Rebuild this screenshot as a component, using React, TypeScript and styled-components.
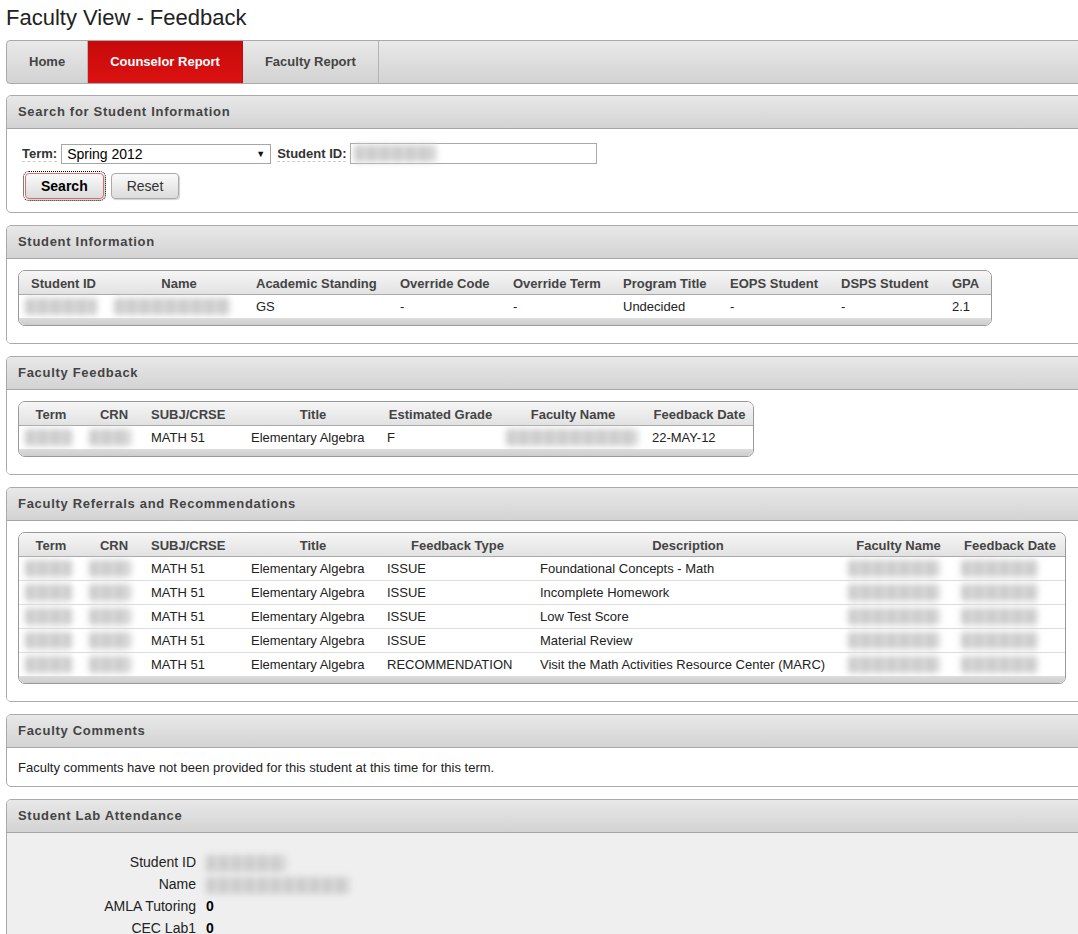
import styled, { createGlobalStyle, css } from 'styled-components';

const GlobalStyle = createGlobalStyle`
  html, body {
    margin: 0;
    padding: 0;
    overflow: hidden;
    background: #fff;
  }
  body {
    font-family: "Liberation Sans", Arial, sans-serif;
    font-size: 13px;
    color: #222;
  }
`;

const Page = styled.div`
  width: 1090px;
  padding: 5px 0 0 6px;
`;

const Title = styled.h1`
  margin: 0 0 10px;
  font-size: 22px;
  line-height: 25px;
  font-weight: normal;
  color: #222;
`;

const NavBar = styled.nav`
  display: flex;
  height: 42px;
  margin-bottom: 11px;
  border: 1px solid #aaa;
  border-radius: 4px;
  overflow: hidden;
  background: linear-gradient(#e9e9e9, #d2d2d2);
`;

const Tab = styled.a<{ $active?: boolean }>`
  display: flex;
  align-items: center;
  padding: 0 22px 2px;
  font-size: 13px;
  font-weight: bold;
  color: #444;
  text-decoration: none;
  border-right: 1px solid #b4b4b4;
  ${p => p.$active && css`
    color: #fff;
    background: linear-gradient(#c70a0a, #dc1111);
    border-right-color: #c40a0a;
  `}
`;

const Panel = styled.section`
  margin-bottom: 12px;
  border: 1px solid #aaa;
  border-radius: 5px;
  overflow: hidden;
  background: #fff;
`;

const PanelHeader = styled.h2`
  margin: 0;
  height: 32px;
  line-height: 32px;
  padding-left: 11px;
  font-size: 13px;
  font-weight: bold;
  letter-spacing: 0.7px;
  color: #444;
  background: linear-gradient(#e8e8e8, #d3d3d3);
  border-bottom: 1px solid #a6a6a6;
`;

const PanelBody = styled.div`
  padding: 11px 11px 17px;
  background: #fff;
`;

const SearchBody = styled.div`
  padding: 14px 0 13px 15px;
  display: flex;
  flex-direction: column;
  gap: 9px;
`;

const FieldRow = styled.div`
  display: flex;
  align-items: center;
  gap: 4px;
`;

const Label = styled.label`
  font-weight: bold;
  color: #333;
  border-bottom: 1px dashed #ccc;
  line-height: 15px;
`;

const SelectBox = styled.div`
  position: relative;
  box-sizing: border-box;
  width: 210px;
  height: 20px;
  margin-right: 2px;
  padding-left: 5px;
  border: 1px solid #a6a6a6;
  font-size: 14px;
  line-height: 18px;
  color: #000;
`;

const Caret = styled.span`
  position: absolute;
  right: 5px;
  top: 0;
  font-size: 9px;
  color: #111;
`;

const TextInput = styled.div`
  box-sizing: border-box;
  width: 247px;
  height: 21px;
  padding: 1px 3px;
  border: 1px solid #a9a9a9;
`;

const ButtonRow = styled.div`
  display: flex;
  gap: 7px;
  padding-left: 3px;
`;

const Button = styled.button<{ $primary?: boolean }>`
  height: 26px;
  padding: 0 15px;
  border: 1px solid #a9a9a9;
  border-radius: 4px;
  background: linear-gradient(#fafafa, #dcdcdc);
  box-shadow: 1px 1px 1px rgba(0, 0, 0, 0.18);
  font-family: "Liberation Sans", Arial, sans-serif;
  font-size: 14px;
  color: #333;
  ${p => p.$primary && css`
    border-color: #e06a6a;
    font-weight: bold;
    color: #000;
    outline: 1px dotted #000;
    outline-offset: 1px;
  `}
`;

const TableFrame = styled.div`
  width: fit-content;
  border: 1px solid #999;
  border-radius: 7px;
  overflow: hidden;
  background: #fff;
`;

const Grid = styled.table`
  border-collapse: collapse;
  table-layout: fixed;
`;

const Th = styled.th<{ $align: string }>`
  height: 21px;
  padding: 2px 6px 0;
  text-align: ${p => p.$align};
  white-space: nowrap;
  font-size: 13px;
  font-weight: bold;
  color: #444;
  background: linear-gradient(#f6f6f6, #e2e2e2);
  border-bottom: 1px solid #aaa;
`;

const Td = styled.td`
  height: 23px;
  padding: 0 6px;
  white-space: nowrap;
  color: #222;
  border-bottom: 1px solid #ddd;
`;

const TableFoot = styled.div`
  height: 6px;
  background: linear-gradient(#dadada, #cdcdcd);
`;

const Redacted = styled.span<{ $w: number }>`
  display: inline-block;
  vertical-align: middle;
  width: ${p => p.$w}px;
  height: 17px;
  border-radius: 3px;
  background: repeating-linear-gradient(90deg, #cbcbcb 0 9px, #dcdcdc 9px 13px);
  filter: blur(3px);
`;

const Note = styled.p`
  margin: 0;
  padding: 12px 11px 11px;
  line-height: 15px;
`;

const AttendanceList = styled.dl`
  margin: 0;
  padding: 18px 0 0;
  display: grid;
  grid-template-columns: 189px auto;
  column-gap: 10px;
  font-size: 14px;
  line-height: 22px;
  color: #222;
  background: #efefef;
  dt {
    text-align: right;
  }
  dd {
    margin: 0;
    font-weight: bold;
    color: #000;
  }
`;

type Col = { h: string; w: number; align?: string };
type Cell = string | number;

const blur = (w: number) => w;

const DataTable = ({ cols, rows }: { cols: Col[]; rows: Cell[][] }) => (
  <TableFrame>
    <Grid style={{ width: cols.reduce((s, c) => s + c.w, 0) }}>
      <colgroup>
        {cols.map(c => (
          <col key={c.h} style={{ width: c.w }} />
        ))}
      </colgroup>
      <thead>
        <tr>
          {cols.map(c => (
            <Th key={c.h} $align={c.align ?? 'center'}>{c.h}</Th>
          ))}
        </tr>
      </thead>
      <tbody>
        {rows.map((r, i) => (
          <tr key={i}>
            {r.map((v, j) => (
              <Td key={j}>{typeof v === 'number' ? <Redacted $w={v} /> : v}</Td>
            ))}
          </tr>
        ))}
      </tbody>
    </Grid>
    <TableFoot />
  </TableFrame>
);

const studentCols: Col[] = [
  { h: 'Student ID', w: 89 },
  { h: 'Name', w: 142 },
  { h: 'Academic Standing', w: 144, align: 'left' },
  { h: 'Override Code', w: 113, align: 'left' },
  { h: 'Override Term', w: 110, align: 'left' },
  { h: 'Program Title', w: 107, align: 'left' },
  { h: 'EOPS Student', w: 111, align: 'left' },
  { h: 'DSPS Student', w: 111, align: 'left' },
  { h: 'GPA', w: 45, align: 'left' },
];

const feedbackCols: Col[] = [
  { h: 'Term', w: 64 },
  { h: 'CRN', w: 62 },
  { h: 'SUBJ/CRSE', w: 100, align: 'left' },
  { h: 'Title', w: 136 },
  { h: 'Estimated Grade', w: 119 },
  { h: 'Faculty Name', w: 146 },
  { h: 'Feedback Date', w: 107 },
];

const referralCols: Col[] = [
  { h: 'Term', w: 64 },
  { h: 'CRN', w: 62 },
  { h: 'SUBJ/CRSE', w: 100, align: 'left' },
  { h: 'Title', w: 136 },
  { h: 'Feedback Type', w: 153 },
  { h: 'Description', w: 308 },
  { h: 'Faculty Name', w: 113 },
  { h: 'Feedback Date', w: 110 },
];

const referrals: [string, string][] = [
  ['ISSUE', 'Foundational Concepts - Math'],
  ['ISSUE', 'Incomplete Homework'],
  ['ISSUE', 'Low Test Score'],
  ['ISSUE', 'Material Review'],
  ['RECOMMENDATION', 'Visit the Math Activities Resource Center (MARC)'],
];

export default function App() {
  return (
    <>
      <GlobalStyle />
      <Page>
        <Title>Faculty View - Feedback</Title>

        <NavBar>
          <Tab>Home</Tab>
          <Tab $active>Counselor Report</Tab>
          <Tab>Faculty Report</Tab>
        </NavBar>

        <Panel>
          <PanelHeader>Search for Student Information</PanelHeader>
          <SearchBody>
            <FieldRow>
              <Label>Term:</Label>
              <SelectBox>
                Spring 2012
                <Caret>▼</Caret>
              </SelectBox>
              <Label>Student ID:</Label>
              <TextInput>
                <Redacted $w={82} />
              </TextInput>
            </FieldRow>
            <ButtonRow>
              <Button $primary>Search</Button>
              <Button>Reset</Button>
            </ButtonRow>
          </SearchBody>
        </Panel>

        <Panel>
          <PanelHeader>Student Information</PanelHeader>
          <PanelBody>
            <DataTable
              cols={studentCols}
              rows={[[blur(72), blur(116), 'GS', '-', '-', 'Undecided', '-', '-', '2.1']]}
            />
          </PanelBody>
        </Panel>

        <Panel>
          <PanelHeader>Faculty Feedback</PanelHeader>
          <PanelBody>
            <DataTable
              cols={feedbackCols}
              rows={[[blur(47), blur(42), 'MATH 51', 'Elementary Algebra', 'F', blur(132), '22-MAY-12']]}
            />
          </PanelBody>
        </Panel>

        <Panel>
          <PanelHeader>Faculty Referrals and Recommendations</PanelHeader>
          <PanelBody>
            <DataTable
              cols={referralCols}
              rows={referrals.map(([type, desc]) => [
                blur(47),
                blur(42),
                'MATH 51',
                'Elementary Algebra',
                type,
                desc,
                blur(92),
                blur(77),
              ])}
            />
          </PanelBody>
        </Panel>

        <Panel>
          <PanelHeader>Faculty Comments</PanelHeader>
          <Note>Faculty comments have not been provided for this student at this time for this term.</Note>
        </Panel>

        <Panel>
          <PanelHeader>Student Lab Attendance</PanelHeader>
          <AttendanceList>
            <dt>Student ID</dt>
            <dd><Redacted $w={80} /></dd>
            <dt>Name</dt>
            <dd><Redacted $w={144} /></dd>
            <dt>AMLA Tutoring</dt>
            <dd>0</dd>
            <dt>CEC Lab1</dt>
            <dd>0</dd>
          </AttendanceList>
        </Panel>
      </Page>
    </>
  );
}
